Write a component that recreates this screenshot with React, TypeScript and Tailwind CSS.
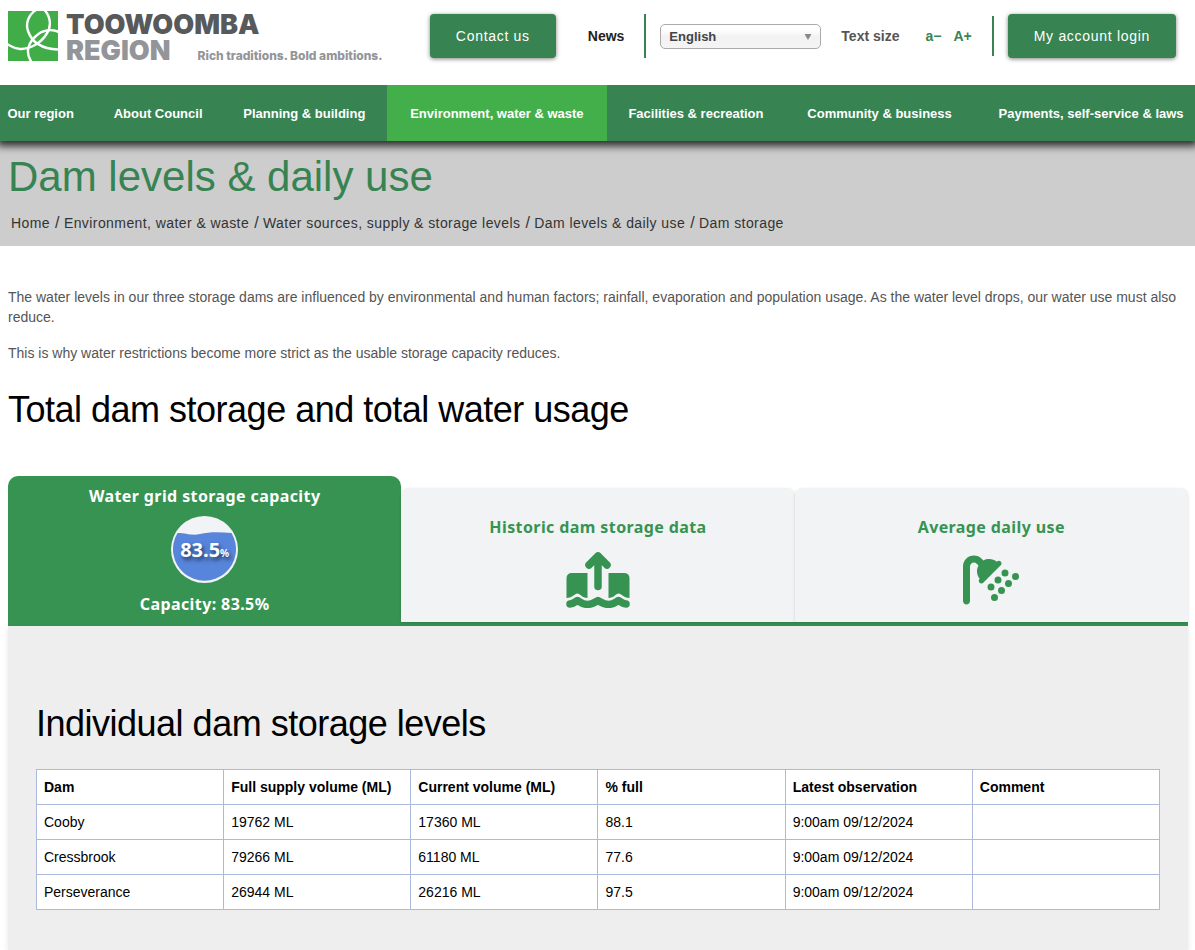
import type { ReactNode } from "react";
import { FaShower } from "react-icons/fa6";

const NAV_ITEMS = [
  { label: "Our region", className: "pr-5 pl-[7px]" },
  { label: "About Council", className: "px-[19px]" },
  { label: "Planning & building", className: "px-[21px]" },
  { label: "Environment, water & waste", className: "bg-[#43af4a] px-[23px]", active: true },
  { label: "Facilities & recreation", className: "px-[21px]" },
  { label: "Community & business", className: "px-[22px]" },
  { label: "Payments, self-service & laws", className: "pr-[11px] pl-6" },
];

const BREADCRUMBS = [
  "Home",
  "Environment, water & waste",
  "Water sources, supply & storage levels",
  "Dam levels & daily use",
  "Dam storage",
];

const COLUMNS = [
  "Dam",
  "Full supply volume (ML)",
  "Current volume (ML)",
  "% full",
  "Latest observation",
  "Comment",
];

const DAMS = [
  ["Cooby", "19762 ML", "17360 ML", "88.1", "9:00am 09/12/2024", ""],
  ["Cressbrook", "79266 ML", "61180 ML", "77.6", "9:00am 09/12/2024", ""],
  ["Perseverance", "26944 ML", "26216 ML", "97.5", "9:00am 09/12/2024", ""],
];

function Logo() {
  return (
    <a href="#" className="flex shrink-0 gap-2">
      <svg viewBox="0 0 50 50" className="h-[50px] w-[50px]" aria-hidden="true">
        <rect width="50" height="50" fill="#41ad49" />
        <g fill="none" stroke="#fff" strokeWidth="2.4">
          <path d="M28 -1C20 4 17.500 13 20 20C23 29 31 38 51 38.500" />
          <path d="M36.500 -1C43 6 43.500 16 38.500 23C33 32 22 38.500 12 38C7 37.500 3 35.500 -1 33" />
          <path d="M51 21C42 17 33 20 28 25C20 32 17 42 23.500 51" />
        </g>
      </svg>
      <span className="flex flex-col font-[Inter,sans-serif] font-black">
        <span className="text-[27px] leading-[28px] text-[#58595b]">TOOWOOMBA</span>
        <span className="flex items-baseline gap-[27px] text-[#939598]">
          <span className="text-[27px] leading-6">REGION</span>
          <span className="text-xs leading-6 font-extrabold whitespace-nowrap">
            Rich traditions. Bold ambitions.
          </span>
        </span>
      </span>
    </a>
  );
}

function HeaderButton({ children }: { children: ReactNode }) {
  return (
    <button
      type="button"
      className="h-11 shrink-0 rounded-sm bg-[#378352] px-[26px] text-sm font-normal tracking-wider whitespace-nowrap text-white shadow-[0_1px_4px_rgba(0,0,0,0.5)]"
    >
      {children}
    </button>
  );
}

function Header() {
  return (
    <header className="relative z-10 flex h-[85px] items-start justify-between bg-white pr-[19px] pl-2">
      <div className="pt-[11px]">
        <Logo />
      </div>
      <div className="flex items-center pt-[14px] text-sm font-bold">
        <HeaderButton>Contact us</HeaderButton>
        <a href="#" className="ml-8 text-[#222]">
          News
        </a>
        <span className="ml-5 h-11 w-[2px] bg-[#378352]" />
        <div className="relative ml-[14px]">
          <select
            aria-label="Language"
            defaultValue="English"
            className="block h-[25px] w-[161px] appearance-none rounded-[5px] border border-[#aaa] bg-linear-to-b from-white from-20% via-[#f2f2f2] via-52% to-[#f4f4f4] px-2 pt-[2px] text-[13px] font-bold text-[#444]"
          >
            <option>English</option>
          </select>
          <svg
            viewBox="0 0 8 6"
            className="pointer-events-none absolute top-[10px] right-[9px] h-[6px] w-2"
            aria-hidden="true"
          >
            <path d="M.5 0h7L4 6z" fill="#888" />
          </svg>
        </div>
        <span className="ml-5 text-[#555]">Text size</span>
        <button type="button" className="ml-[26px] font-bold text-[#378352]">
          a−
        </button>
        <button type="button" className="ml-3 font-bold text-[#378352]">
          A+
        </button>
        <span className="mr-[14px] ml-5 h-10 w-[2px] bg-[#378352]" />
        <HeaderButton>My account login</HeaderButton>
      </div>
    </header>
  );
}

function MainNav() {
  return (
    <nav className="relative bg-[#378352] shadow-[0_2px_8px_3px_rgba(0,0,0,0.8)]">
      <ul className="flex">
        {NAV_ITEMS.map((item) => (
          <li key={item.label} className="flex-auto">
            <a
              href="#"
              aria-current={item.active ? "page" : undefined}
              className={`flex h-14 items-center justify-center pt-px text-[13px] font-bold whitespace-nowrap text-white ${item.className}`}
            >
              {item.label}
            </a>
          </li>
        ))}
      </ul>
    </nav>
  );
}

function PageTitle() {
  return (
    <div className="h-[105px] bg-[#cdcdcd] px-2 pt-3">
      <h1 className="text-[42px] leading-[48px] text-[#378352]">Dam levels &amp; daily use</h1>
      <nav aria-label="Breadcrumb" className="mt-3 pl-[3px]">
        <ol className="flex text-sm tracking-[0.03em] text-[#333]">
          {BREADCRUMBS.map((crumb, i) => (
            <li key={crumb} className="flex">
              {i > 0 && <span className="pr-1 pl-[5px] text-base leading-5">/</span>}
              <a href="#">{crumb}</a>
            </li>
          ))}
        </ol>
      </nav>
    </div>
  );
}

function CapacityGauge() {
  return (
    <span className="relative flex h-[67px] w-[67px] items-center justify-center">
      <svg viewBox="0 0 67 67" className="absolute inset-0" aria-hidden="true">
        <circle cx="33.5" cy="33.5" r="33.5" fill="#f1f3f6" />
        <path
          d="M6.500 17C16 17 20 20 29 18C39 15.500 49 16 60.500 17A31.500 31.500 0 1 1 6.500 17Z"
          fill="#5885dc"
        />
      </svg>
      <span className="relative flex items-baseline text-xl tracking-normal [text-shadow:2px_3px_4px_rgba(0,0,0,0.6)]">
        83.5<span className="text-[10px]">%</span>
      </span>
    </span>
  );
}

function DamIcon() {
  return (
    <svg viewBox="0 0 64 56" className="h-14 w-16" fill="currentColor" aria-hidden="true">
      <path d="M6 21H21.500V46C17 46 15 43 13 42Q11 41 9 42.500C6 45 3 46 .500 46V26.500Q.500 21 6 21Z" />
      <path d="M42.500 21H58Q63.500 21 63.500 26.500V46C61 46 58 45 55 42.500Q53 41 51 42C49 43 47 46 42.500 46Z" />
      <g
        fill="none"
        stroke="currentColor"
        strokeWidth="7.5"
        strokeLinecap="round"
        strokeLinejoin="round"
      >
        <path d="M32 34.500V4M23 13L32 4L41 13" />
        <path d="M4 52C7 52 9 50 11.500 48.500C14 50 17 52.500 21.500 52.500C26 52.500 29 50 32 48.500C35 50 38 52.500 42.500 52.500C47 52.500 50 50 52.500 48.500C55 50 57 52 60 52" />
      </g>
    </svg>
  );
}

function StorageTabs() {
  const inactive =
    "mt-3 flex h-[134px] flex-1 flex-col items-center rounded-t-lg bg-[#f1f3f4] pt-[27px] tracking-wide text-[#379351] shadow-[0_1px_3px_rgba(0,0,0,0.15)]";

  return (
    <div
      role="tablist"
      className="flex border-b-4 border-[#379351] font-['Noto_Sans',sans-serif] text-base font-bold"
    >
      <button
        type="button"
        role="tab"
        aria-selected="true"
        className="flex h-[146px] flex-1 flex-col items-center rounded-t-[10px] bg-[#379351] pt-2 tracking-wide text-white"
      >
        <span>Water grid storage capacity</span>
        <span className="mt-2">
          <CapacityGauge />
        </span>
        <span className="mt-[9px]">Capacity: 83.5%</span>
      </button>
      <button type="button" role="tab" aria-selected="false" className={inactive}>
        <span>Historic dam storage data</span>
        <span className="mt-[13px]">
          <DamIcon />
        </span>
      </button>
      <button type="button" role="tab" aria-selected="false" className={inactive}>
        <span>Average daily use</span>
        <FaShower className="mt-[13px] h-14 w-14" aria-hidden="true" />
      </button>
    </div>
  );
}

function DamTable() {
  return (
    <table className="mt-[23px] w-full table-fixed border-collapse bg-white text-left text-sm text-black">
      <thead>
        <tr>
          {COLUMNS.map((column) => (
            <th key={column} scope="col" className="h-[35px] border border-[#adb9dd] px-[7px] font-bold">
              {column}
            </th>
          ))}
        </tr>
      </thead>
      <tbody>
        {DAMS.map((row) => (
          <tr key={row[0]}>
            {row.map((cell, i) => (
              <td key={COLUMNS[i]} className="h-[35px] border border-[#adb9dd] px-[7px]">
                {cell}
              </td>
            ))}
          </tr>
        ))}
      </tbody>
    </table>
  );
}

export default function App() {
  return (
    <div className="min-h-screen overflow-x-hidden bg-white font-['Liberation_Sans',Arial,sans-serif]">
      <Header />
      <MainNav />
      <PageTitle />
      <main className="pr-[7px] pl-2">
        <div className="flex flex-col gap-4 pt-[41px] text-sm text-[#555]">
          <p>
            The water levels in our three storage dams are influenced by environmental and human
            factors; rainfall, evaporation and population usage. As the water level drops, our water
            use must also reduce.
          </p>
          <p>
            This is why water restrictions become more strict as the usable storage capacity
            reduces.
          </p>
        </div>
        <h2 className="mt-[25px] mb-11 text-[36px] leading-[44px] tracking-[-0.5px] text-black">
          Total dam storage and total water usage
        </h2>
        <StorageTabs />
        <section className="bg-[#eee] px-7 pt-[76px] pb-10 shadow-[0_2px_6px_rgba(0,0,0,0.1)]">
          <h2 className="text-[36px] leading-[44px] tracking-[-0.5px] text-black">
            Individual dam storage levels
          </h2>
          <DamTable />
        </section>
      </main>
    </div>
  );
}
